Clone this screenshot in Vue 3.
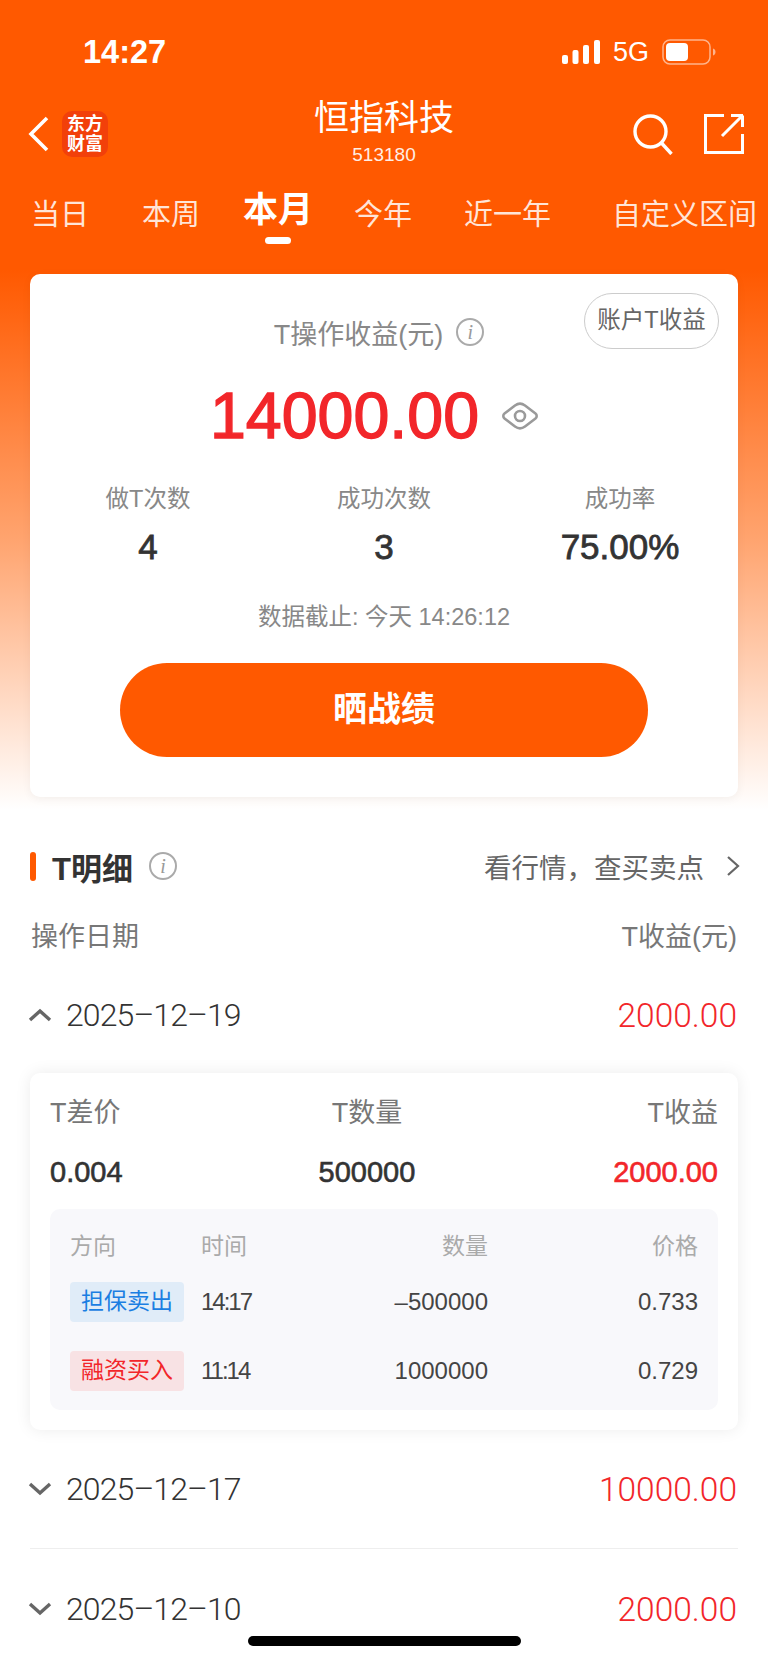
<script setup>
const tabs = ['当日', '本周', '本月', '今年', '近一年', '自定义区间'];
const stats = [
  { label: '做T次数', value: '4' },
  { label: '成功次数', value: '3' },
  { label: '成功率', value: '75.00%' },
];
const trades = [
  { type: '担保卖出', cls: 'sell', time: '14:17', qty: '–500000', price: '0.733' },
  { type: '融资买入', cls: 'buy', time: '11:14', qty: '1000000', price: '0.729' },
];
</script>

<template>
  <div class="page">
    <div class="status">
      <span class="clock">14:27</span>
      <div class="status-right">
        <svg width="38" height="24" viewBox="0 0 38 24" fill="#fff">
          <rect x="0" y="15" width="6" height="9" rx="2" />
          <rect x="10.500" y="10" width="6" height="14" rx="2" />
          <rect x="21" y="5" width="6" height="19" rx="2" />
          <rect x="32" y="0" width="6" height="24" rx="2" />
        </svg>
        <span class="net">5G</span>
        <svg width="54" height="26" viewBox="0 0 54 26">
          <rect x="1" y="1" width="47" height="24" rx="7" fill="none" stroke="#fff" stroke-opacity=".55" stroke-width="1.500" />
          <rect x="4" y="4" width="22" height="18" rx="4" fill="#fff" />
          <path d="M51 9.500c1.600.5 2.500 1.900 2.500 3.500s-.9 3-2.500 3.500z" fill="#fff" fill-opacity=".55" />
        </svg>
      </div>
    </div>

    <div class="nav">
      <svg class="back" width="22" height="36" viewBox="0 0 22 36" fill="none" stroke="#fff" stroke-width="3.600">
        <path d="M19 2 3 18l16 16" />
      </svg>
      <div class="logo"><span>东方</span><span>财富</span></div>
      <div class="nav-title">
        <div class="name">恒指科技</div>
        <div class="code">513180</div>
      </div>
      <svg class="search" width="42" height="42" viewBox="0 0 42 42" fill="none" stroke="#fff" stroke-width="3.400">
        <circle cx="18.500" cy="18.500" r="15.500" />
        <path d="m29.500 30 10 11" />
      </svg>
      <svg width="40" height="40" viewBox="0 0 40 40" fill="none" stroke="#fff" stroke-width="3">
        <path d="M20 1.500H1.500v37h37V20" />
        <path d="M39 1.500H27M38.500 1.500 18 22M38.500 1.500V13" />
      </svg>
    </div>

    <div class="tabs">
      <div v-for="t in tabs" :key="t" class="tab" :class="{ active: t === '本月' }">{{ t }}</div>
    </div>
    <div class="indicator"></div>

    <div class="card">
      <div class="pill">账户T收益</div>
      <div class="card-title">
        T操作收益(元)
        <span class="info big">i</span>
      </div>
      <div class="total">
        <span class="total-num">14000.00</span>
        <svg width="36" height="28" viewBox="0 0 36 28" fill="none" stroke="#9a9a9a" stroke-width="2.600">
          <path d="M2.500 11.500 13 3.500c3-2.200 7-2.200 10 0l10.500 8c1.600 1.200 1.600 3.800 0 5l-10.500 8c-3 2.200-7 2.200-10 0l-10.500-8c-1.600-1.200-1.600-3.800 0-5z" />
          <circle cx="18" cy="14" r="5" />
        </svg>
      </div>
      <div class="stats">
        <div v-for="s in stats" :key="s.label" class="stat">
          <div class="stat-label">{{ s.label }}</div>
          <div class="stat-value">{{ s.value }}</div>
        </div>
      </div>
      <div class="deadline">数据截止: 今天 14:26:12</div>
      <div class="share">晒战绩</div>
    </div>

    <div class="section-head">
      <div class="section-left">
        <i class="bar"></i>
        <span class="section-title">T明细</span>
        <span class="info">i</span>
      </div>
      <div class="section-link">
        看行情，查买卖点
        <svg width="14" height="22" viewBox="0 0 14 22" fill="none" stroke="#666" stroke-width="2.200">
          <path d="m2 2 10 9-10 9" />
        </svg>
      </div>
    </div>

    <div class="col-head">
      <span>操作日期</span>
      <span>T收益(元)</span>
    </div>

    <div class="day first">
      <svg width="24" height="14" viewBox="0 0 24 14" fill="none" stroke="#666" stroke-width="3.400">
        <path d="m2 12 10-9 10 9" />
      </svg>
      <span class="date">2025–12–19</span>
      <span class="amount">2000.00</span>
    </div>

    <div class="detail">
      <div class="detail-row labels">
        <span>T差价</span>
        <span>T数量</span>
        <span>T收益</span>
      </div>
      <div class="detail-row values">
        <span>0.004</span>
        <span>500000</span>
        <span class="red">2000.00</span>
      </div>
      <div class="panel">
        <div class="grid head">
          <span>方向</span>
          <span>时间</span>
          <span class="r">数量</span>
          <span class="r">价格</span>
        </div>
        <div v-for="t in trades" :key="t.time" class="grid row">
          <span class="badge" :class="t.cls">{{ t.type }}</span>
          <span class="time">{{ t.time }}</span>
          <span class="r">{{ t.qty }}</span>
          <span class="r">{{ t.price }}</span>
        </div>
      </div>
    </div>

    <div class="day second">
      <svg width="24" height="14" viewBox="0 0 24 14" fill="none" stroke="#666" stroke-width="3.400">
        <path d="m2 2 10 9 10-9" />
      </svg>
      <span class="date">2025–12–17</span>
      <span class="amount">10000.00</span>
    </div>
    <div class="line"></div>
    <div class="day third">
      <svg width="24" height="14" viewBox="0 0 24 14" fill="none" stroke="#666" stroke-width="3.400">
        <path d="m2 2 10 9 10-9" />
      </svg>
      <span class="date">2025–12–10</span>
      <span class="amount">2000.00</span>
    </div>

    <div class="home"></div>
  </div>
</template>

<style scoped>
* {
  box-sizing: border-box;
}

.page {
  position: relative;
  width: 768px;
  height: 1663px;
  overflow: hidden;
  font-family: "Liberation Sans", "Noto Sans CJK SC", sans-serif;
  background: linear-gradient(#ff5900 0, #ff5900 270px, #ffa46f 540px, #fff 810px);
  color: #333;
}

.status {
  display: flex;
  justify-content: space-between;
  align-items: center;
  height: 50px;
  margin-top: 27px;
  padding: 0 52px 0 83px;
  color: #fff;
}

.clock {
  font-size: 32.500px;
  font-weight: 700;
}

.status-right {
  display: flex;
  align-items: center;
  gap: 13px;
}

.net {
  font-size: 27px;
}

.nav {
  display: flex;
  align-items: center;
  height: 86px;
  margin-top: 14px;
  padding: 0 24px 0 28px;
}

.back {
  margin-right: 12px;
}

.logo {
  display: flex;
  flex-direction: column;
  align-items: center;
  justify-content: center;
  width: 46px;
  height: 46px;
  border-radius: 10px;
  background: #f2400a;
  color: #fff;
  font-size: 18px;
  line-height: 20px;
  font-weight: 700;
}

.nav-title {
  flex: 1;
  margin-left: 28px;
  padding-bottom: 5px;
  text-align: center;
  color: #fff;
}

.name {
  font-size: 35px;
  line-height: 44px;
}

.code {
  margin-top: 3px;
  font-size: 19px;
  line-height: 24px;
  opacity: .9;
}

.search {
  margin-right: 30px;
}

.tabs {
  display: flex;
  align-items: center;
  height: 50px;
  margin-top: 10px;
  padding-left: 31px;
  color: rgba(255, 255, 255, .85);
  font-size: 29px;
}

.tab:nth-child(2) { margin-left: 53px; }
.tab:nth-child(3) { margin-left: 43px; }
.tab:nth-child(4) { margin-left: 41px; }
.tab:nth-child(5) { margin-left: 52px; }
.tab:nth-child(6) { margin-left: 61px; }

.tab.active {
  color: #fff;
  font-size: 35px;
  font-weight: 700;
  transform: translateY(-6px);
}

.indicator {
  width: 26px;
  height: 7px;
  margin: 0 0 0 265px;
  border-radius: 4px;
  background: #fff;
}

.card {
  position: relative;
  width: 708px;
  height: 523px;
  margin: 30px 0 0 30px;
  padding-top: 38px;
  border-radius: 10px;
  background: #fff;
  text-align: center;
  box-shadow: 0 2px 10px rgba(0, 0, 0, .05);
}

.pill {
  position: absolute;
  top: 19px;
  right: 19px;
  width: 135px;
  height: 56px;
  border: 1.500px solid #ccc;
  border-radius: 28px;
  color: #666;
  font-size: 23.500px;
  line-height: 53px;
}

.card-title {
  display: flex;
  justify-content: center;
  align-items: center;
  gap: 13px;
  height: 40px;
  padding-right: 10px;
  color: #888;
  font-size: 27px;
}

.info {
  display: inline-flex;
  align-items: center;
  justify-content: center;
  width: 28px;
  height: 28px;
  border: 2px solid #aaa;
  border-radius: 50%;
  color: #999;
  font-family: "Liberation Serif", serif;
  font-style: italic;
  font-size: 20px;
  font-weight: 400;
}

.total {
  display: flex;
  justify-content: center;
  align-items: center;
  gap: 23px;
  height: 80px;
  margin-top: 24px;
  padding-right: 20px;
}

.total-num {
  color: #f2262a;
  font-size: 64.500px;
  -webkit-text-stroke: 1.400px #f2262a;
}

.stats {
  display: grid;
  grid-template-columns: repeat(3, 1fr);
  margin-top: 25px;
}

.stat-label {
  height: 36px;
  color: #888;
  font-size: 23.500px;
  line-height: 36px;
}

.stat-value {
  height: 40px;
  margin-top: 10px;
  color: #333;
  font-size: 35px;
  -webkit-text-stroke: .8px #333;
  line-height: 40px;
}

.deadline {
  margin-top: 32px;
  color: #888;
  font-size: 23.500px;
  line-height: 36px;
}

.share {
  width: 528px;
  height: 94px;
  margin: 28px auto 0;
  border-radius: 47px;
  background: #ff5900;
  color: #fff;
  font-size: 34px;
  font-weight: 700;
  line-height: 92px;
}

.section-head {
  display: flex;
  justify-content: space-between;
  align-items: center;
  height: 40px;
  margin-top: 49px;
  padding: 0 28px 0 30px;
}

.section-left {
  display: flex;
  align-items: center;
}

.bar {
  width: 6px;
  height: 29px;
  margin-right: 16px;
  border-radius: 3px;
  background: #ff5900;
}

.section-title {
  margin-right: 16px;
  font-size: 31px;
  font-weight: 700;
}

.section-link {
  display: flex;
  align-items: center;
  gap: 22px;
  color: #666;
  font-size: 27.500px;
}

.col-head {
  display: flex;
  justify-content: space-between;
  height: 40px;
  margin-top: 31px;
  padding: 0 31px;
  color: #777;
  font-size: 27px;
  line-height: 40px;
}

.day {
  display: flex;
  align-items: center;
  height: 44px;
  padding: 0 31px 0 28px;
}

.day.first { margin-top: 36px; }
.day.second { margin-top: 37px; }
.day.third { margin-top: 38px; }

.date {
  margin-left: 14px;
  color: #333;
  font-family: Roboto, "Liberation Sans", sans-serif;
  font-size: 32px;
  font-weight: 300;
  letter-spacing: -.9px;
}

.amount {
  margin-left: auto;
  color: #f2262a;
  font-family: Roboto, "Liberation Sans", sans-serif;
  font-size: 33.500px;
  font-weight: 300;
}

.detail {
  width: 708px;
  height: 357px;
  margin: 36px 0 0 30px;
  padding: 20px 20px 0;
  border-radius: 10px;
  background: #fff;
  box-shadow: 0 0 16px rgba(0, 0, 0, .08);
}

.detail-row {
  display: grid;
  grid-template-columns: 268px 98px 1fr;
}

.detail-row span:nth-child(2) { text-align: center; }
.detail-row span:nth-child(3) { text-align: right; }

.labels {
  color: #777;
  font-size: 27px;
  line-height: 40px;
}

.values {
  margin-top: 19px;
  color: #333;
  font-size: 29px;
  -webkit-text-stroke: .6px currentColor;
  line-height: 40px;
}

.red {
  color: #f2262a;
}

.panel {
  height: 201px;
  margin-top: 17px;
  padding: 17px 20px 0;
  border-radius: 10px;
  background: #f8f8fb;
}

.grid {
  display: grid;
  grid-template-columns: 131px 1fr 120px 210px;
  align-items: center;
}

.head {
  height: 36px;
  color: #aaa;
  font-size: 23px;
}

.row {
  height: 40px;
  margin-top: 20px;
  color: #444;
  font-size: 24px;
}

.row + .row {
  margin-top: 29px;
}

.time {
  letter-spacing: -2px;
}

.r {
  text-align: right;
}

.badge {
  width: 114px;
  height: 40px;
  border-radius: 4px;
  font-size: 23px;
  line-height: 38px;
  text-align: center;
}

.sell {
  background: #e0ecf8;
  color: #1b7ee2;
}

.buy {
  background: #f8e2e4;
  color: #f2262a;
}

.line {
  height: 1px;
  margin: 37px 30px 0;
  background: #eee;
}

.home {
  position: absolute;
  left: 248px;
  bottom: 17px;
  width: 273px;
  height: 10px;
  border-radius: 5px;
  background: #000;
}
</style>
